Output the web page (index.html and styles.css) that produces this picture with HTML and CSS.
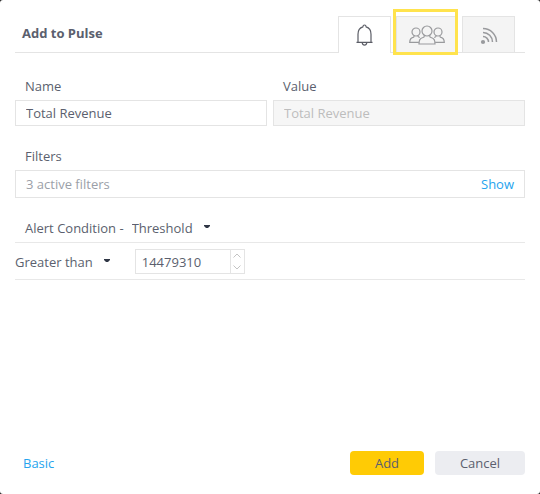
FILE: index.html
```html
<!DOCTYPE html>
<html lang="en">
<head>
<meta charset="utf-8">
<meta name="viewport" content="width=device-width, initial-scale=1">
<title>Add to Pulse</title>
<link rel="stylesheet" href="styles.css">
</head>
<body>
<form class="dialog">
  <header class="header">
    <h1 class="title">Add to Pulse</h1>
    <nav class="tabs">
      <button type="button" class="tab tab-active" aria-label="Alert">
        <svg width="17" height="22" viewBox="0 0 17 22" fill="none" stroke="currentColor" stroke-width="1.200">
          <path d="M.5 18.400h16M2 18.200v-8C2 6 3.600 3.700 6.900 2.800 7 1.500 7.600 1 8.500 1s1.500.5 1.600 1.800C13.400 3.700 15 6 15 10.200v8M6.200 18.600c.2 1.600 1 2.500 2.300 2.500s2.100-.9 2.300-2.500"/>
        </svg>
      </button>
      <button type="button" class="tab tab-wide" aria-label="Share">
        <svg width="36" height="20" viewBox="0 0 36 20" fill="none" stroke="currentColor" stroke-width="1.200">
          <circle cx="18" cy="6" r="5"/>
          <path d="M15.200 10.200v1.200c0 .6-.4.900-1.200 1.100-3.300.9-3.900 2.500-4 6.500h16c-.1-4-.7-5.600-4-6.500-.8-.2-1.200-.5-1.200-1.100v-1.200"/>
          <circle cx="7" cy="7" r="4"/>
          <circle cx="29" cy="7" r="4"/>
          <path d="M5 10.500v1c0 .5-.3.700-1 .9C1.300 13.100.8 14.500.700 17.400h9.200M9 10.500v.8c0 .5.500.8 1.800 1.200M31 10.500v1c0 .5.3.7 1 .9 2.700.7 3.200 2.100 3.300 5h-9.200M27 10.500v.8c0 .5-.5.8-1.800 1.200"/>
        </svg>
      </button>
      <button type="button" class="tab tab-feed" aria-label="Feed">
        <svg width="18" height="18" viewBox="0 0 18 18" fill="none" stroke="currentColor" stroke-width="1.500">
          <circle cx="3" cy="15" r="2.100" fill="currentColor" stroke="none"/>
          <path d="M3 9.500a5.500 5.500 0 0 1 5.500 5.500M3 5.500a9.500 9.500 0 0 1 9.500 9.500M3 1.500A13.500 13.500 0 0 1 16.500 15"/>
        </svg>
      </button>
    </nav>
  </header>

  <div class="fields">
    <div class="field">
      <label class="label" for="name">Name</label>
      <input class="input" id="name" type="text" value="Total Revenue">
    </div>
    <div class="field">
      <label class="label" for="value">Value</label>
      <input class="input" id="value" type="text" value="Total Revenue" disabled>
    </div>
  </div>

  <section class="field filters">
    <h2 class="label">Filters</h2>
    <div class="summary"><span>3 active filters</span><a class="link" href="#filters">Show</a></div>
  </section>

  <div class="row condition">
    <label for="condition">Alert Condition -</label>
    <span class="picker">
      <select id="condition"><option>Threshold</option></select>
      <svg class="caret" width="6" height="4" viewBox="0 0 6 4"><path d="M0 0h6v1L4 3H2L0 1z"/></svg>
    </span>
  </div>
  <div class="row comparison">
    <span class="picker">
      <select aria-label="Comparison"><option>Greater than</option></select>
      <svg class="caret" width="6" height="4" viewBox="0 0 6 4"><path d="M0 0h6v1L4 3H2L0 1z"/></svg>
    </span>
    <div class="number">
      <input type="text" inputmode="numeric" aria-label="Threshold value" value="14479310">
      <div class="stepper">
        <button type="button" aria-label="Increase"><svg width="8" height="5" viewBox="0 0 8 5"><path d="M.5 4.500 4 1l3.500 3.500"/></svg></button>
        <button type="button" aria-label="Decrease"><svg width="8" height="5" viewBox="0 0 8 5"><path d="M.5.5 4 4 7.500.5"/></svg></button>
      </div>
    </div>
  </div>

  <footer class="footer">
    <a class="link" href="#basic">Basic</a>
    <div class="actions">
      <button type="submit" class="button button-primary">Add</button>
      <button type="button" class="button button-cancel">Cancel</button>
    </div>
  </footer>
</form>
</body>
</html>
```
FILE: styles.css
```css
* {
  box-sizing: border-box;
}

body {
  margin: 0;
  background: #222;
  color: #5b5f6e;
  font: 13px/18px "Open Sans", sans-serif;
}

button,
input,
select {
  margin: 0;
  padding: 0;
  color: inherit;
  font: inherit;
}

svg {
  display: block;
}

.dialog {
  display: flex;
  flex-direction: column;
  min-height: 100vh;
  padding: 16px 15px 19px;
  border-radius: 3px;
  background: #fff;
}

.header {
  display: flex;
  justify-content: space-between;
  padding: 0 10px 0 7px;
  border-bottom: 1px solid #e4e4e4;
}

.title {
  margin: 0;
  padding-top: 8px;
  font-size: 13px;
  line-height: 18px;
}

.tabs {
  display: flex;
  gap: 5px;
  height: 36px;
}

.tab {
  display: flex;
  align-items: center;
  justify-content: center;
  width: 53px;
  border: 1px solid #e4e4e4;
  border-bottom: 0;
  background: #f4f4f4;
  color: #999a9d;
}

.tab-active {
  height: 37px;
  background: #fff;
  color: #5b5d66;
}

.tab-wide {
  position: relative;
  width: 61px;
}

.tab-wide::after {
  position: absolute;
  inset: -8px -2px -3px -4px;
  border: 3px solid #ffe34d;
  content: "";
}

.tab-feed {
  padding-top: 2px;
}

.fields {
  display: grid;
  grid-template-columns: 1fr 1fr;
  gap: 6px;
  margin-top: 24px;
}

.field {
  display: flex;
  flex-direction: column;
  gap: 5px;
}

.label {
  margin: 0;
  padding-left: 10px;
  font-size: 13px;
  font-weight: 400;
}

.input {
  width: 100%;
  height: 26px;
  padding: 0 10px;
  border: 1px solid #e4e4e4;
  border-radius: 0;
  background: #fff;
}

.input:disabled {
  background: #f6f6f6;
  color: #bdbdbd;
}

.filters {
  margin-top: 21px;
}

.summary {
  display: flex;
  align-items: center;
  justify-content: space-between;
  height: 28px;
  padding: 0 10px;
  border: 1px solid #e4e4e4;
  color: #9b9fa8;
}

.link {
  color: #26a4ee;
  text-decoration: none;
}

.row {
  display: flex;
  align-items: center;
  border-bottom: 1px solid #e8e8e8;
}

.condition {
  gap: 8px;
  margin-top: 16px;
  padding: 5px 10px;
}

.comparison {
  gap: 25px;
  padding: 6px 0 5px;
}

.picker {
  position: relative;
}

.picker select {
  display: block;
  height: 18px;
  padding-right: 17px;
  border: 0;
  background: none;
  appearance: none;
  field-sizing: content;
}

.caret {
  position: absolute;
  top: 6px;
  right: 0;
  fill: #2f3645;
  pointer-events: none;
}

.number {
  display: flex;
  width: 110px;
  height: 25px;
  border: 1px solid #e4e4e4;
}

.number input {
  flex: 1;
  min-width: 0;
  padding: 0 6px;
  border: 0;
  background: none;
}

.stepper {
  display: flex;
  flex-direction: column;
  width: 14px;
  border-left: 1px solid #e4e4e4;
}

.stepper button {
  display: flex;
  flex: 1;
  align-items: center;
  justify-content: center;
  border: 0;
  background: none;
}

.stepper path {
  fill: none;
  stroke: #c4c4c4;
}

.footer {
  display: flex;
  align-items: center;
  justify-content: space-between;
  margin-top: auto;
  padding-left: 8px;
}

.actions {
  display: flex;
  gap: 11px;
}

.button {
  height: 24px;
  border: 0;
  border-radius: 4px;
}

.button-primary {
  width: 74px;
  background: #ffcb05;
}

.button-cancel {
  width: 90px;
  background: #ecedf1;
}
```
